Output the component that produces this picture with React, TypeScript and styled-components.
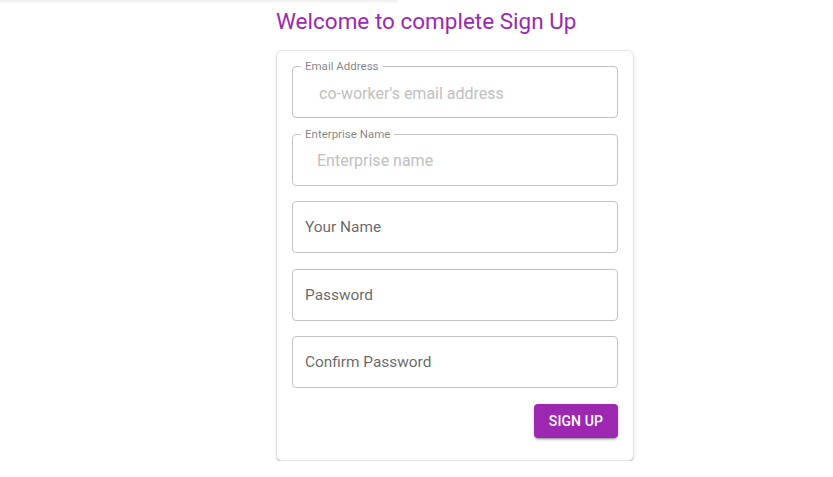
import React from 'react'
import styled, { createGlobalStyle } from 'styled-components'

const GlobalStyle = createGlobalStyle`
  html, body {
    margin: 0;
    padding: 0;
    background: #ffffff;
    font-family: Roboto, "Liberation Sans", Arial, sans-serif;
  }
`

const TopShade = styled.div`
  width: 397px;
  height: 3px;
  background: linear-gradient(#eeeeee, #fafafa);
`

const Page = styled.div`
  padding-left: 276px;
  display: flex;
  flex-direction: column;
  align-items: flex-start;
`

const Title = styled.h1`
  margin: 3px 0 0 0;
  font-size: 22.5px;
  line-height: 30px;
  font-weight: 400;
  color: #9c27b0;
`

const Card = styled.form`
  margin-top: 14px;
  width: 358px;
  box-sizing: border-box;
  padding: 15px 15px 22px 15px;
  background: #fff;
  border: 1px solid #e6e6e6;
  border-radius: 6px;
  box-shadow: 0px 2px 2px -1px rgba(0, 0, 0, 0.28), 0px 1px 3px 0px rgba(0, 0, 0, 0.1);
  display: flex;
  flex-direction: column;
  gap: 15.5px;
`

const Field = styled.div`
  position: relative;
  height: 52px;
  box-sizing: border-box;
  border: 1px solid #c4c4c4;
  border-radius: 4px;
  padding: 0 12px;
  display: flex;
  align-items: center;
`

const FloatLabel = styled.label`
  position: absolute;
  top: -8px;
  left: 8px;
  padding: 0 4px;
  background: #fff;
  font-size: 11.5px;
  line-height: 14px;
  color: rgba(0, 0, 0, 0.5);
`

const Input = styled.input<{ indent?: number; faded?: boolean }>`
  border: none;
  outline: none;
  background: transparent;
  width: 100%;
  font-family: Roboto, "Liberation Sans", Arial, sans-serif;
  font-size: ${({ faded }) => (faded ? 16 : 15.4)}px;
  color: rgba(0, 0, 0, 0.87);
  padding: ${({ faded }) => (faded ? '2px' : '0')} 0 0 ${({ indent }) => indent ?? 0}px;

  &::placeholder {
    color: ${({ faded }) => (faded ? '#c0c0c0' : 'rgba(0, 0, 0, 0.62)')};
    opacity: 1;
  }
`

const Actions = styled.div`
  display: flex;
  justify-content: flex-end;
`

const SubmitButton = styled.button`
  height: 34px;
  padding: 0 15px;
  border: none;
  border-radius: 4px;
  background: #9c27b0;
  color: #fff;
  font-family: Roboto, "Liberation Sans", Arial, sans-serif;
  font-weight: 500;
  font-size: 14px;
  letter-spacing: 0.1px;
  text-transform: uppercase;
  box-shadow: 0px 3px 1px -2px rgba(0, 0, 0, 0.2), 0px 2px 2px 0px rgba(0, 0, 0, 0.14),
    0px 1px 5px 0px rgba(0, 0, 0, 0.12);
  cursor: pointer;
`

export default function App() {
  return (
    <>
      <GlobalStyle />
      <TopShade />
      <Page>
        <Title>Welcome to complete Sign Up</Title>
        <Card onSubmit={e => e.preventDefault()}>
          <Field>
            <FloatLabel>Email Address</FloatLabel>
            <Input faded indent={14} placeholder="co-worker's email address" />
          </Field>
          <Field>
            <FloatLabel>Enterprise Name</FloatLabel>
            <Input faded indent={12} placeholder="Enterprise name" />
          </Field>
          <Field>
            <Input placeholder="Your Name" />
          </Field>
          <Field>
            <Input type="password" placeholder="Password" />
          </Field>
          <Field>
            <Input type="password" placeholder="Confirm Password" />
          </Field>
          <Actions>
            <SubmitButton type="submit">Sign Up</SubmitButton>
          </Actions>
        </Card>
      </Page>
    </>
  )
}
